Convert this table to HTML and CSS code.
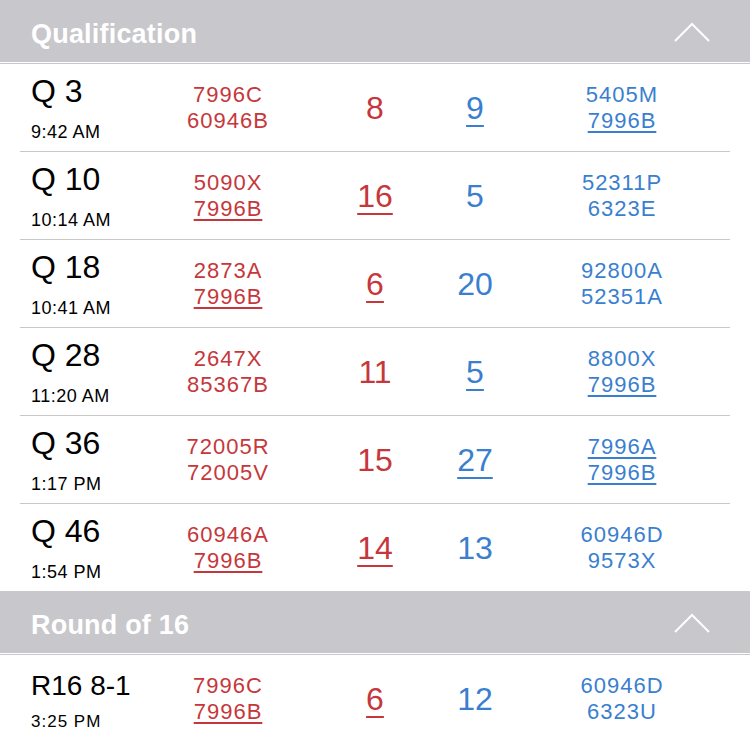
FILE: index.html
```html
<!DOCTYPE html>
<html lang="en">

<head>
    <meta charset="UTF-8">
    <meta name="viewport" content="width=device-width, initial-scale=1.0">
    <title>Matches</title>

    <link rel="stylesheet" href="styles.css">
</head>

<body>
    <!-- Qualification section -->
    <div class="section-head">
        <div class="section-bar">
            <span class="section-title">Qualification</span>
            <svg class="chevron" width="36" height="20" viewBox="0 0 36 20">
                <polyline points="1,19 18,2 35,19" fill="none" stroke="#fff" stroke-width="2"></polyline>
            </svg>
        </div>
    </div>

    <div class="match">
        <div class="match-name">
            <div class="match-id">Q 3</div>
            <div class="match-time">9:42 AM</div>
        </div>
        <div class="teams red"><span>7996C</span><span>60946B</span></div>
        <div class="score red">8</div>
        <div class="score blue"><u>9</u></div>
        <div class="teams blue"><span>5405M</span><span><u>7996B</u></span></div>
    </div>

    <div class="match">
        <div class="match-name">
            <div class="match-id">Q 10</div>
            <div class="match-time">10:14 AM</div>
        </div>
        <div class="teams red"><span>5090X</span><span><u>7996B</u></span></div>
        <div class="score red"><u>16</u></div>
        <div class="score blue">5</div>
        <div class="teams blue"><span>52311P</span><span>6323E</span></div>
    </div>

    <div class="match">
        <div class="match-name">
            <div class="match-id">Q 18</div>
            <div class="match-time">10:41 AM</div>
        </div>
        <div class="teams red"><span>2873A</span><span><u>7996B</u></span></div>
        <div class="score red"><u>6</u></div>
        <div class="score blue">20</div>
        <div class="teams blue"><span>92800A</span><span>52351A</span></div>
    </div>

    <div class="match">
        <div class="match-name">
            <div class="match-id">Q 28</div>
            <div class="match-time">11:20 AM</div>
        </div>
        <div class="teams red"><span>2647X</span><span>85367B</span></div>
        <div class="score red">11</div>
        <div class="score blue"><u>5</u></div>
        <div class="teams blue"><span>8800X</span><span><u>7996B</u></span></div>
    </div>

    <div class="match">
        <div class="match-name">
            <div class="match-id">Q 36</div>
            <div class="match-time">1:17 PM</div>
        </div>
        <div class="teams red"><span>72005R</span><span>72005V</span></div>
        <div class="score red">15</div>
        <div class="score blue"><u>27</u></div>
        <div class="teams blue"><span><u>7996A</u></span><span><u>7996B</u></span></div>
    </div>

    <div class="match last">
        <div class="match-name">
            <div class="match-id">Q 46</div>
            <div class="match-time">1:54 PM</div>
        </div>
        <div class="teams red"><span>60946A</span><span><u>7996B</u></span></div>
        <div class="score red"><u>14</u></div>
        <div class="score blue">13</div>
        <div class="teams blue"><span>60946D</span><span>9573X</span></div>
    </div>

    <!-- Round of 16 section -->
    <div class="section-head">
        <div class="section-bar">
            <span class="section-title">Round of 16</span>
            <svg class="chevron" width="36" height="20" viewBox="0 0 36 20">
                <polyline points="1,19 18,2 35,19" fill="none" stroke="#fff" stroke-width="2"></polyline>
            </svg>
        </div>
    </div>

    <div class="match">
        <div class="match-name elim">
            <div class="match-id">R16 8-1</div>
            <div class="match-time">3:25 PM</div>
        </div>
        <div class="teams red"><span>7996C</span><span><u>7996B</u></span></div>
        <div class="score red"><u>6</u></div>
        <div class="score blue">12</div>
        <div class="teams blue"><span>60946D</span><span>6323U</span></div>
    </div>
</body>

</html>
```

FILE: styles.css
```css
body {
    font-family: "Liberation Sans", Arial, sans-serif;
    background-color: #fff;
    color: #000;
    margin: 0;
    padding: 0;
}

.section-head {
    padding-bottom: 1px;
    border-bottom: 1px solid #c8c8cc;
}

.section-bar {
    height: 62px;
    background-color: #c7c7cc;
    display: flex;
    align-items: center;
    justify-content: space-between;
    padding: 0 40px 0 31px;
}

.section-title {
    color: #fff;
    font-size: 27px;
    font-weight: bold;
    letter-spacing: 0.2px;
    margin-top: 6px;
}

.chevron {
    display: block;
    margin-top: 1px;
}

.match {
    height: 87px;
    margin: 0 20px;
    border-bottom: 1px solid #c8c8c8;
    display: grid;
    grid-template-columns: 135px 146px 148px 52px 242px;
    align-items: center;
}

.match.last {
    border-bottom: none;
}

.match-name {
    align-self: start;
    padding: 9px 0 0 11px;
}

.match-id {
    font-size: 32px;
    line-height: 36px;
    white-space: nowrap;
}

.match-time {
    font-size: 18px;
    line-height: 20px;
    letter-spacing: 0.5px;
    margin-top: 13px;
    white-space: nowrap;
}

/* eliminations use a smaller title */
.match-name.elim {
    padding-top: 13px;
}

.elim .match-id {
    font-size: 28px;
}

.elim .match-time {
    font-size: 17px;
    letter-spacing: 1px;
    margin-top: 8px;
}

.teams {
    display: flex;
    flex-direction: column;
    align-items: center;
    font-size: 22px;
    line-height: 26px;
    letter-spacing: 1px;
}

.score {
    text-align: center;
    font-size: 32px;
    line-height: 36px;
}

.red {
    color: #c6373b;
}

.blue {
    color: #3a7fcf;
}

u {
    text-decoration-thickness: 2px;
    text-underline-offset: 3px;
}

.score u {
    text-underline-offset: 6px;
}
```
